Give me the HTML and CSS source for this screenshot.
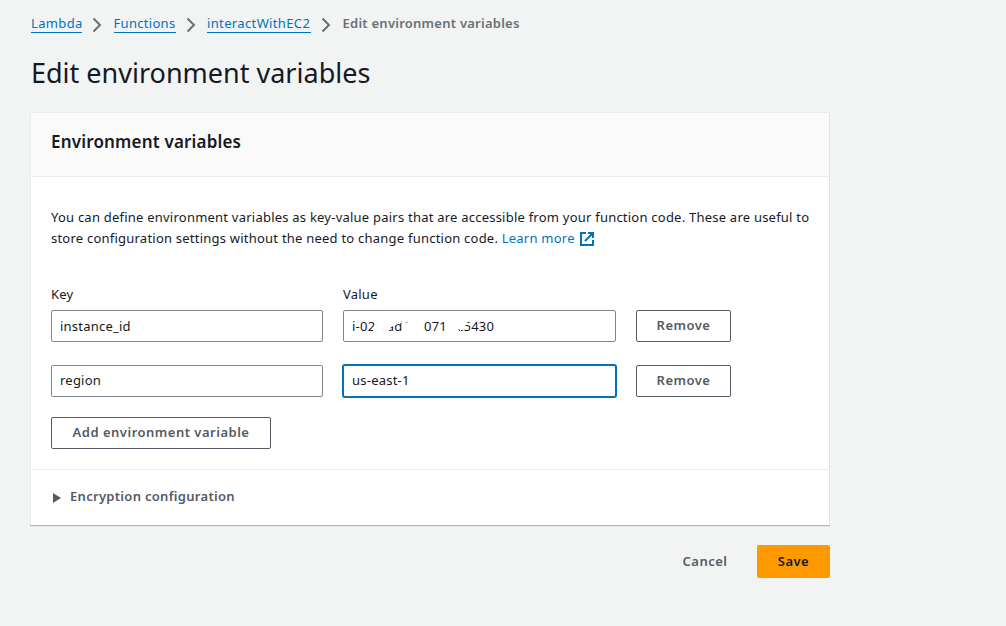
FILE: index.html
```html
<!DOCTYPE html>
<html lang="en">
<head>
<meta charset="utf-8">
<title>Edit environment variables</title>
<link rel="stylesheet" href="styles.css">
</head>
<body>
<main class="page">
  <nav class="breadcrumbs">
    <a class="crumb crumb-lambda" href="#">Lambda</a>
    <svg class="chevron" viewBox="0 0 10 16"><path d="M1.500 1.500 8 8l-6.500 6.500"/></svg>
    <a class="crumb crumb-functions" href="#">Functions</a>
    <svg class="chevron" viewBox="0 0 10 16"><path d="M1.500 1.500 8 8l-6.500 6.500"/></svg>
    <a class="crumb crumb-name" href="#">interactWithEC2</a>
    <svg class="chevron" viewBox="0 0 10 16"><path d="M1.500 1.500 8 8l-6.500 6.500"/></svg>
    <span class="current">Edit environment variables</span>
  </nav>
  <h1 class="title">Edit environment variables</h1>
  <section class="panel">
    <header class="panel-header"><h2 class="heading">Environment variables</h2></header>
    <div class="panel-body">
      <p class="description">You can define environment variables as key-value pairs that are accessible from your function code. These are useful to<br>store configuration settings without the need to change function code. <a class="learn" href="#">Learn more</a><svg class="external" viewBox="0 0 16 16"><path d="M7 2H2v12h12V9M9 2h5v5M14 2 6 10"/></svg></p>
      <div class="grid">
        <span class="label">Key</span><span class="label">Value</span><span></span>
        <div class="input">instance_id</div>
        <div class="input redacted"><span class="part part-a">i-02</span><span class="part part-b">.ad</span><span class="part part-c">071</span><span class="part part-d">c5430</span>
          <svg class="mask" viewBox="0 0 160 30"><path d="M33 0V12L29 18V30H31V20H36V0ZM36 0V18H40V30H45V18L49 15L57 12V0ZM104 0V19L116 18.500V30H117V18L120 15L126 13L121 10V0Z"/><path class="trace" d="M61 12L64 11"/></svg>
        </div>
        <button class="button">Remove</button>
        <div class="input second">region</div>
        <div class="input second focused">us-east-1</div>
        <button class="button">Remove</button>
      </div>
      <button class="button add">Add environment variable</button>
    </div>
    <div class="expander"><svg class="caret" viewBox="0 0 8 10"><path d="M0 0 8 5 0 10Z"/></svg><span>Encryption configuration</span></div>
  </section>
  <footer class="actions">
    <button class="cancel">Cancel</button>
    <button class="save">Save</button>
  </footer>
</main>
</body>
</html>
```
FILE: styles.css
```css
* { box-sizing: border-box; }
body {
  margin: 0;
  min-height: 626px;
  background: #f2f3f3;
  color: #16191f;
  font: 13px/21px "Noto Sans", "Open Sans", sans-serif;
  letter-spacing: 0.226px;
}
.page { width: 800px; margin-left: 30px; padding-top: 13px; }
.breadcrumbs { display: flex; align-items: flex-start; height: 22px; padding-left: 1px; }
.crumb { color: #0073bb; height: 20px; line-height: 21px; border-bottom: 1px solid #0073bb; text-decoration: none; white-space: nowrap; }
.crumb-lambda { width: 51px; letter-spacing: 0.35px; }
.crumb-functions { width: 62px; letter-spacing: 0.3px; }
.crumb-name { width: 104px; letter-spacing: 0.36px; }
.chevron { flex: none; width: 10px; height: 16px; margin: 4px 11.500px 0 10px; fill: none; stroke: #687078; stroke-width: 2; }
.current { color: #687078; font-weight: 600; letter-spacing: 0.25px; white-space: nowrap; }
.title { margin: 20px 0 0 1px; font-size: 27px; line-height: 36px; font-weight: 400; letter-spacing: 0; white-space: nowrap; }
.panel {
  margin-top: 21px;
  background: #fff;
  border: 1px solid #eaeded;
  border-right-color: #dfe3e3;
  border-bottom: 0;
  height: 413px;
  box-shadow: 0 1px 1px #aab7b8;
  clip-path: inset(0 0 -3px 0);
}
.panel-header { height: 64px; padding: 18px 20px; background: #fafafa; border-bottom: 1px solid #eaeded; }
.heading { margin: 0; font-size: 17px; line-height: 22px; font-weight: 600; letter-spacing: 0.18px; }
.panel-body { height: 292px; padding: 30px 20px 0; }
.description { margin: 0; white-space: nowrap; }
.learn { color: #0073bb; text-decoration: none; }
.external { width: 16px; height: 16px; margin-left: 4px; vertical-align: -4px; fill: none; stroke: #0073bb; stroke-width: 2; }
.grid { display: grid; grid-template-columns: 272px 273px 96px; grid-template-rows: 26px 55px 32px; column-gap: 20px; margin-top: 35px; }
.label { line-height: 20px; }
.input { height: 32px; padding: 0 8px; border: 1px solid #7f8891; border-radius: 2px; background: #fff; line-height: 30px; white-space: nowrap; }
.second { line-height: 29px; }
.focused { border-color: #0073bb; box-shadow: 0 0 0 1px #0073bb; }
.redacted { position: relative; display: flex; }
.part-a { width: 29px; }
.part-b { width: 43px; padding-left: 2px; }
.part-c { width: 33px; }
.part-d { width: 40px; }
.mask { position: absolute; left: 0; top: 0; width: 160px; height: 30px; fill: #fff; }
.trace { stroke: #a8abb0; stroke-width: 1; }
.button { height: 32px; padding: 0 0 2px; border: 1px solid #545b64; border-radius: 2px; background: #fff; color: #545b64; font: 600 13px/28px "Noto Sans", "Open Sans", sans-serif; letter-spacing: 0.5px; }
.grid .button { width: 95px; }
.add { display: block; width: 220px; margin-top: 20px; }
.expander { display: flex; align-items: center; gap: 9px; height: 55px; padding: 0 0 1px 22px; border-top: 1px solid #eaeded; color: #545b64; font-weight: 600; letter-spacing: 0.3px; }
.caret { width: 8px; height: 10px; margin-top: 3px; fill: #545b64; }
.actions { display: flex; justify-content: flex-end; gap: 29px; padding-top: 20px; }
.cancel, .save { height: 33px; padding: 0; border: 0; background: none; color: #545b64; font: 600 13px/31px "Noto Sans", "Open Sans", sans-serif; letter-spacing: 0.5px; white-space: nowrap; }
.cancel { width: 46px; }
.save { width: 73px; border-radius: 2px; background: #ff9900; color: #16191f; }
```
